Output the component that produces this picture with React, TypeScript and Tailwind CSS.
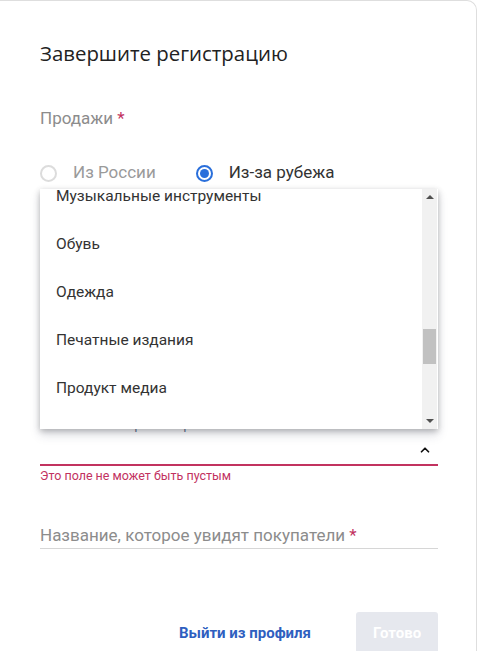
import { ChevronUp } from 'lucide-react';

const items = ['Музыкальные инструменты', 'Обувь', 'Одежда', 'Печатные издания', 'Продукт медиа', 'Спорт'];

function CategoryList() {
  return (
    <div className="absolute left-0 top-[-231px] w-[398px] h-[240px] bg-white shadow-[0_2px_6px_rgba(0,0,0,0.25),0_6px_10px_rgba(40,50,80,0.15)] overflow-hidden flex">
      <div className="flex-1 -mt-4">
        {items.map(item => (
          <div key={item} className="h-12 flex items-center pl-4 text-[15.5px] text-[#333]">
            {item}
          </div>
        ))}
      </div>
      <div className="w-[15px] mr-[1px] bg-[#f1f1f1] flex flex-col items-center py-[6px]">
        <div className="w-0 h-0 border-x-[4px] border-x-transparent border-b-[4px] border-b-[#505050]" />
        <div className="w-[13px] h-[35px] bg-[#c1c1c1] mt-[130px]" />
        <div className="flex-1" />
        <div className="w-0 h-0 border-x-[4px] border-x-transparent border-t-[4px] border-t-[#505050]" />
      </div>
    </div>
  );
}

export default function App() {
  return (
    <div className="w-[483px] h-[651px] bg-white overflow-hidden font-['Roboto',sans-serif]">
      <div className="w-[477px] h-[660px] border-r border-t border-[#dedede] rounded-tr-[10px] pl-10 pr-[38px] pt-[38px]">
        <h1 className="font-['Open_Sans',sans-serif] text-[20.4px] leading-7 text-[#222]">Завершите регистрацию</h1>

        <div className="mt-[39px] text-[17px] leading-6 text-[#8c8c8c]">
          Продажи <span className="text-[#c2325f]">*</span>
        </div>

        <div className="mt-[31px] flex items-center h-6 text-[17px]">
          <span className="w-[17px] h-[17px] rounded-full border-2 border-[#dcdcdc]" />
          <span className="ml-4 text-[#9a9a9a]">Из России</span>
          <span className="ml-[40px] w-[17px] h-[17px] rounded-full border-2 border-[#2a6fdb] flex items-center justify-center">
            <span className="w-[9px] h-[9px] rounded-full bg-[#2a6fdb]" />
          </span>
          <span className="ml-4 text-[#333]">Из-за рубежа</span>
        </div>

        <div className="relative mt-[235px]">
          <div className="h-4 flex items-start">
            <span className="text-[12px] leading-3 text-[#5a6b8c] -mt-[1px]">Основная категория товаров</span>
          </div>
          <div className="h-[28px] flex items-center justify-end pr-[6px]">
            <ChevronUp className="w-[14px] h-[14px] text-[#111]" strokeWidth={3} />
          </div>
          <div className="h-[2px] bg-[#c2325f]" />
          <div className="mt-[2px] text-[12.5px] leading-4 text-[#c2325f]">Это поле не может быть пустым</div>
          <CategoryList />
        </div>

        <div className="mt-[39px] pb-[1px] border-b border-[#d6d6d6] text-[17px] leading-6 text-[#8c8c8c]">
          Название, которое увидят покупатели <span className="text-[#c2325f]">*</span>
        </div>

        <div className="mt-[63px] flex items-center justify-end">
          <button className="text-[15px] font-bold text-[#2f5fbf] mr-[45px]">Выйти из профиля</button>
          <button className="w-[82px] h-[42px] rounded-[3px] bg-[#e6e8ee] text-white text-[15px] font-bold">Готово</button>
        </div>
      </div>
    </div>
  );
}
